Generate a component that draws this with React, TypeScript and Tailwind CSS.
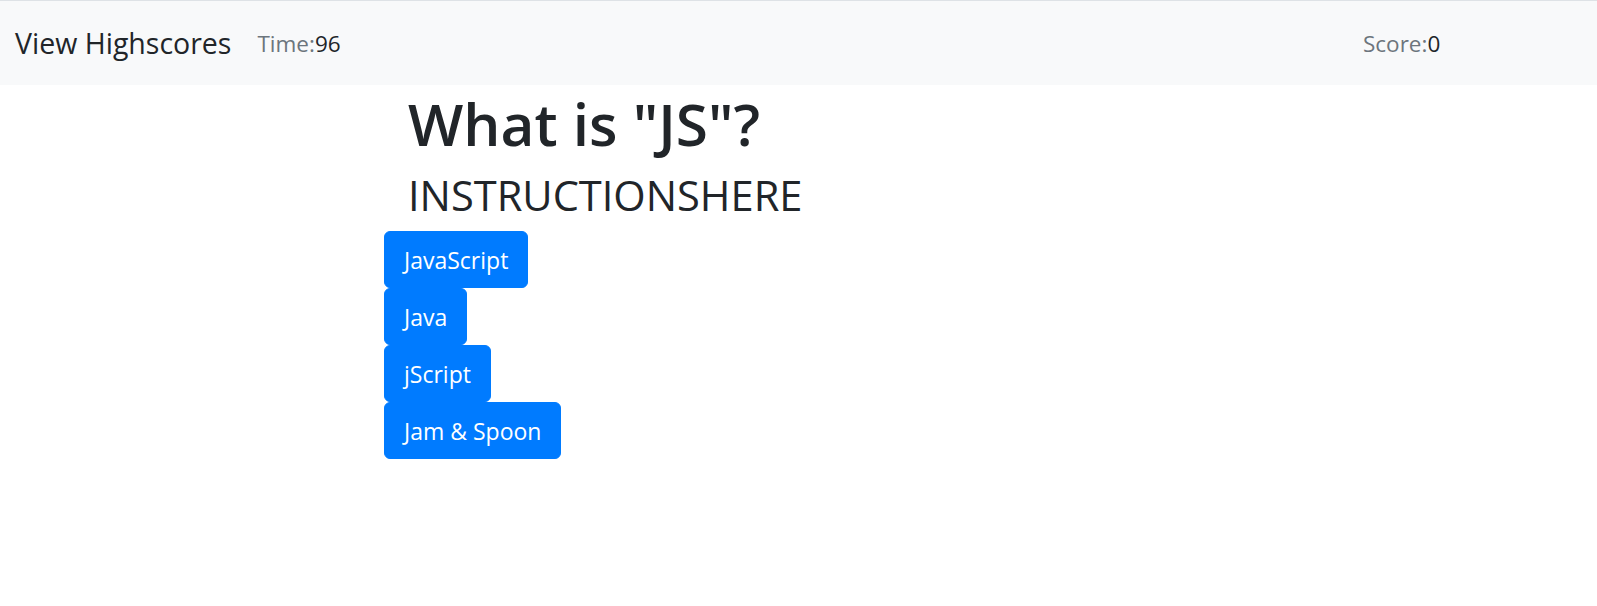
import React from "react";

const font = { fontFamily: '"Open Sans", "Noto Sans", sans-serif' };

export default function App() {
  const answers = ["JavaScript", "Java", "jScript", "Jam & Spoon"];
  return (
    <div className="min-h-[606px] bg-white text-[#212529]" style={font}>
      <nav className="flex h-[85px] items-center border-t border-[#dee2e6] bg-[#f8f9fa] pt-[1px]">
        <div className="ml-[15px] text-[28.5px] leading-[45px] text-[#212529]">View Highscores</div>
        <div className="ml-[26px] text-[22.5px] leading-[36px] text-[#6c757d]">
          Time:<span className="text-[#212529]">96</span>
        </div>
        <div className="flex-1" />
        <div className="w-[234px] text-[22.5px] leading-[36px] text-[#6c757d]">
          Score:<span className="text-[#212529]">0</span>
        </div>
      </nav>
      <main className="pl-[384px]">
        <div className="pl-[24px]">
          <h1 className="mt-[2px] text-[58.5px] font-semibold leading-[72px]">What is "JS"?</h1>
          <h2 className="mt-[9px] text-[41.6px] font-normal leading-[54px]">INSTRUCTIONSHERE</h2>
        </div>
        <div className="mt-[9px] flex flex-col items-start">
          {answers.map((a) => (
            <button
              key={a}
              className="h-[57px] rounded-[6px] border border-[#007bff] bg-[#007bff] px-[19px] text-[23px] leading-[36px] text-white"
            >
              {a}
            </button>
          ))}
        </div>
      </main>
    </div>
  );
}
